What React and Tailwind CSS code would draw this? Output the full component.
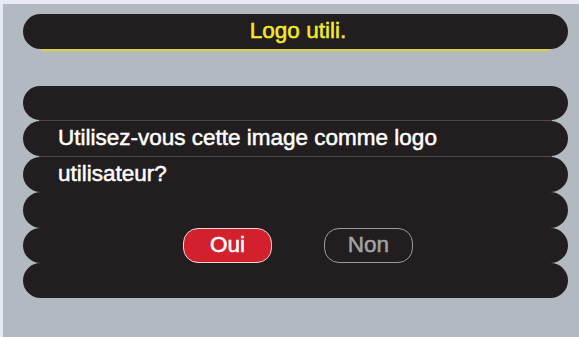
export default function App() {
  const font = { fontFamily: '"Liberation Sans", Arial, sans-serif' };
  const txt = "text-[22.5px] leading-none [-webkit-text-stroke:0.5px_currentColor]";
  return (
    <div className="w-[579px] h-[337px] bg-[#e7e9f7] pl-[3px] pt-[4px] flex" style={font}>
      <div className="flex-1 bg-[#b3b9c1] pl-[20px] pr-[11px] pt-[10px] flex flex-col">
        <div className="flex flex-col">
          <div className="h-[35px] rounded-full bg-[#221e1f] flex items-center justify-center">
            <span className="text-[22.5px] leading-none [-webkit-text-stroke:0.5px_currentColor] text-[#f2ea2a] ml-[5px]">Logo utili.</span>
          </div>
          <div className="h-[2px] mx-[18px] bg-[#d9d23a]"></div>
        </div>
        <div className="mt-[35px] flex flex-col">
          <div className="h-[34px] rounded-full bg-[#221e1f]"></div>
          <div className="h-[1px] mx-[16px] bg-[#4d494a]"></div>
          <div className="h-[35px] rounded-full bg-[#221e1f] flex items-center pl-[35px]">
            <span className="text-[22.5px] leading-none [-webkit-text-stroke:0.5px_currentColor] text-white">Utilisez-vous cette image comme logo</span>
          </div>
          <div className="h-[1px] mx-[16px] bg-[#4d494a]"></div>
          <div className="h-[35px] rounded-full bg-[#221e1f] flex items-center pl-[35px]">
            <span className="text-[22.5px] leading-none [-webkit-text-stroke:0.5px_currentColor] text-white">utilisateur?</span>
          </div>
          <div className="h-[36px] rounded-full bg-[#221e1f]"></div>
          <div className="h-[35px] rounded-full bg-[#221e1f] flex items-center justify-center gap-[52px] pl-[5px]">
            <div className="w-[89px] h-[35px] rounded-[15px] bg-[#d3202d] border border-[#f3d6d6] flex items-center justify-center">
              <span className="text-[22.5px] leading-none [-webkit-text-stroke:0.5px_currentColor] text-white">Oui</span>
            </div>
            <div className="w-[89px] h-[35px] rounded-[15px] border border-[#9c9c9c] flex items-center justify-center">
              <span className="text-[22.5px] leading-none [-webkit-text-stroke:0.5px_currentColor] text-[#a3a3a3]">Non</span>
            </div>
          </div>
          <div className="h-[35px] rounded-full bg-[#221e1f]"></div>
        </div>
      </div>
    </div>
  );
}
